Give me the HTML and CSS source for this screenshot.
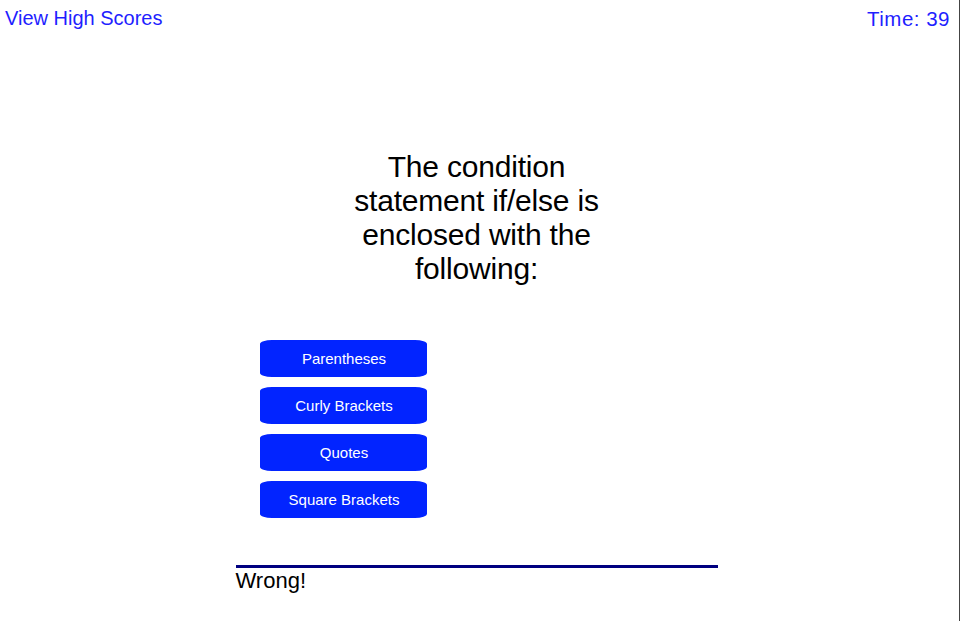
FILE: index.html
```html
<!DOCTYPE html>
<html lang="en">
<head>
<meta charset="utf-8">
<title>Code Quiz</title>
<link rel="stylesheet" href="styles.css">
</head>
<body>
<div class="page">
  <header class="topbar">
    <a class="scores-link" href="#">View High Scores</a>
    <span class="timer">Time: 39</span>
  </header>
  <main class="quiz">
    <h2 class="question">The condition statement if/else is enclosed with the following:</h2>
    <div class="choices">
      <button class="choice">Parentheses</button>
      <button class="choice">Curly Brackets</button>
      <button class="choice">Quotes</button>
      <button class="choice">Square Brackets</button>
    </div>
    <div class="feedback">Wrong!</div>
  </main>
</div>
</body>
</html>
```

FILE: styles.css
```css
html, body {
  margin: 0;
  padding: 0;
  background: #fff;
}

body {
  font-family: "Liberation Sans", Arial, sans-serif;
  color: #000;
}

.page {
  width: 960px;
  height: 621px;
  box-sizing: border-box;
  border-right: 1px solid #444;
  padding-right: 6px;
  overflow: hidden;
}

.topbar {
  display: flex;
  justify-content: space-between;
  padding: 7px 3px 0 5px;
  font-size: 20px;
  line-height: 23px;
}

.scores-link,
.timer {
  color: #1f1fff;
  text-decoration: none;
}

.timer {
  font-size: 20.5px;
  letter-spacing: 0.5px;
}

.quiz {
  width: 482px;
  margin: 0 auto;
}

.question {
  width: 280px;
  margin: 120px auto 0;
  font-size: 30px;
  font-weight: normal;
  line-height: 34px;
  text-align: center;
  letter-spacing: -0.2px;
}

.choices {
  display: flex;
  flex-direction: column;
  align-items: flex-start;
  gap: 10px;
  margin: 54px 0 0 24px;
}

.choice {
  width: 167px;
  height: 37px;
  border: none;
  border-radius: 12px / 4px;
  background: #0224ff;
  color: #fff;
  font-family: "Liberation Sans", Arial, sans-serif;
  font-size: 15px;
  padding: 0 0 0 2px;
  cursor: pointer;
}

.feedback {
  margin-top: 47px;
  border-top: 3px solid #000080;
  font-size: 22px;
  line-height: 25px;
}
```
